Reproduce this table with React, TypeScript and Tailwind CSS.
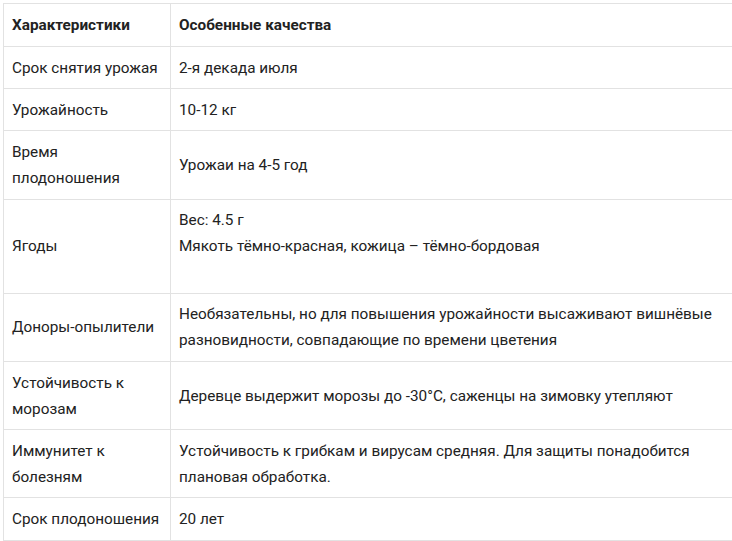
const rows: { label: string; value: string[] }[] = [
  { label: 'Срок снятия урожая', value: ['2-я декада июля'] },
  { label: 'Урожайность', value: ['10-12 кг'] },
  { label: 'Время плодоношения', value: ['Урожаи на 4-5 год'] },
  { label: 'Ягоды', value: ['Вес: 4.5 г', 'Мякоть тёмно-красная, кожица – тёмно-бордовая', ''] },
  {
    label: 'Доноры-опылители',
    value: ['Необязательны, но для повышения урожайности высаживают вишнёвые разновидности, совпадающие по времени цветения'],
  },
  { label: 'Устойчивость к морозам', value: ['Деревце выдержит морозы до -30°C, саженцы на зимовку утепляют'] },
  {
    label: 'Иммунитет к болезням',
    value: ['Устойчивость к грибкам и вирусам средняя. Для защиты понадобится плановая обработка.'],
  },
  { label: 'Срок плодоношения', value: ['20 лет'] },
];

export default function App() {
  return (
    <div className="h-[541px] w-[732px] overflow-hidden bg-white pl-[3px] pt-[3px] font-['Roboto',sans-serif] text-[15.3px] leading-[26px] text-[#222]">
      <table className="w-[750px] table-fixed border-collapse">
        <colgroup>
          <col className="w-[167px]" />
          <col />
        </colgroup>
        <thead>
          <tr>
            <th className="border border-[#e2e2e2] px-[8px] py-[8px] text-left font-bold">Характеристики</th>
            <th className="border border-[#e2e2e2] px-[8px] py-[8px] text-left font-bold">Особенные качества</th>
          </tr>
        </thead>
        <tbody>
          {rows.map((r) => (
            <tr key={r.label}>
              <td className="border border-[#e2e2e2] px-[8px] py-[7.6px] align-middle">{r.label}</td>
              <td className="border border-[#e2e2e2] px-[8px] py-[7.6px] align-middle">
                {r.value.map((v, i) => (
                  <div key={i} className="min-h-[26px]">
                    {v}
                  </div>
                ))}
              </td>
            </tr>
          ))}
        </tbody>
      </table>
    </div>
  );
}
